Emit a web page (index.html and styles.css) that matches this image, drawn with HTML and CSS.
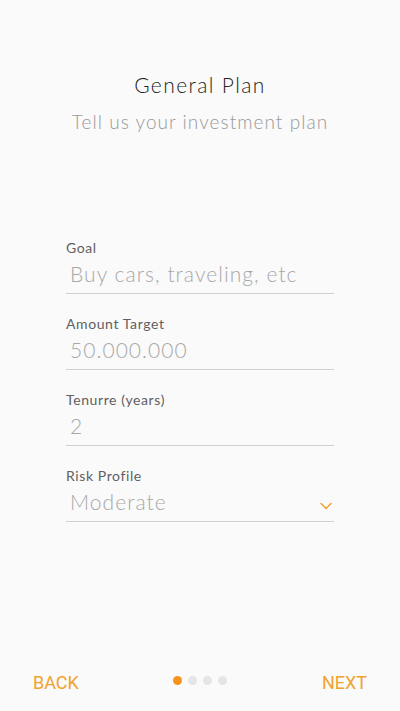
FILE: index.html
```html
<!DOCTYPE html>
<html>
<head>
<meta charset="utf-8">
<link rel="stylesheet" href="styles.css">
</head>
<body>
<div class="screen">
  <header class="head">
    <h1 class="title">General Plan</h1>
    <p class="subtitle">Tell us your investment plan</p>
  </header>
  <form class="form">
    <div class="field">
      <label class="label">Goal</label>
      <div class="input placeholder">Buy cars, traveling, etc</div>
    </div>
    <div class="field">
      <label class="label">Amount Target</label>
      <div class="input">50.000.000</div>
    </div>
    <div class="field">
      <label class="label">Tenurre (years)</label>
      <div class="input">2</div>
    </div>
    <div class="field">
      <label class="label">Risk Profile</label>
      <div class="input select">
        <span>Moderate</span>
        <svg class="chev" width="12" height="8" viewBox="0 0 12 8"><path d="M1 1.5 L6 6.5 L11 1.5" fill="none" stroke="#F0A22E" stroke-width="1.5" stroke-linecap="round" stroke-linejoin="round"/></svg>
      </div>
    </div>
  </form>
  <footer class="foot">
    <span class="btn back">BACK</span>
    <div class="dots">
      <span class="dot active"></span>
      <span class="dot"></span>
      <span class="dot"></span>
      <span class="dot"></span>
    </div>
    <span class="btn next">NEXT</span>
  </footer>
</div>
</body>
</html>
```

FILE: styles.css
```css
html, body {
  margin: 0;
  padding: 0;
  background: #fafafa;
}
.screen {
  width: 400px;
  height: 711px;
  display: flex;
  flex-direction: column;
  font-family: "Lato", "Open Sans", sans-serif;
  box-sizing: border-box;
}
.head {
  padding-top: 72px;
  text-align: center;
}
.title {
  margin: 0;
  font-size: 21px;
  font-weight: 300;
  color: #222;
  line-height: 26px;
  letter-spacing: 1.4px;
}
.subtitle {
  margin: 12px 0 0;
  font-size: 19px;
  font-weight: 300;
  color: #999;
  line-height: 24px;
  letter-spacing: 1.05px;
}
.form {
  margin: 105px 66px 0;
  display: flex;
  flex-direction: column;
  gap: 21px;
}
.field {
  display: flex;
  flex-direction: column;
}
.label {
  font-size: 14px;
  font-weight: 400;
  color: #606060;
  line-height: 18px;
  letter-spacing: 0.6px;
}
.input {
  margin-top: 3px;
  padding: 0 0 5px 4px;
  font-size: 21px;
  font-weight: 300;
  color: #a8a8a8;
  line-height: 28px;
  border-bottom: 1px solid #cfcfcf;
  letter-spacing: 1.05px;
}
.select {
  display: flex;
  align-items: center;
  justify-content: space-between;
}
.chev {
  margin-right: 2px;
  margin-top: 8px;
}
.foot {
  margin-top: auto;
  height: 56px;
  padding: 0 33px;
  display: grid;
  grid-template-columns: 1fr auto 1fr;
  align-items: center;
  font-family: "Roboto", sans-serif;
}
.btn {
  font-size: 18px;
  color: #F0A22E;
  line-height: 20px;
}
.next {
  justify-self: end;
}
.dots {
  display: flex;
  gap: 6px;
  margin-bottom: 6px;
}
.dot {
  width: 9px;
  height: 9px;
  border-radius: 50%;
  background: #e5e5e5;
}
.dot.active {
  background: #F7931E;
}
```
